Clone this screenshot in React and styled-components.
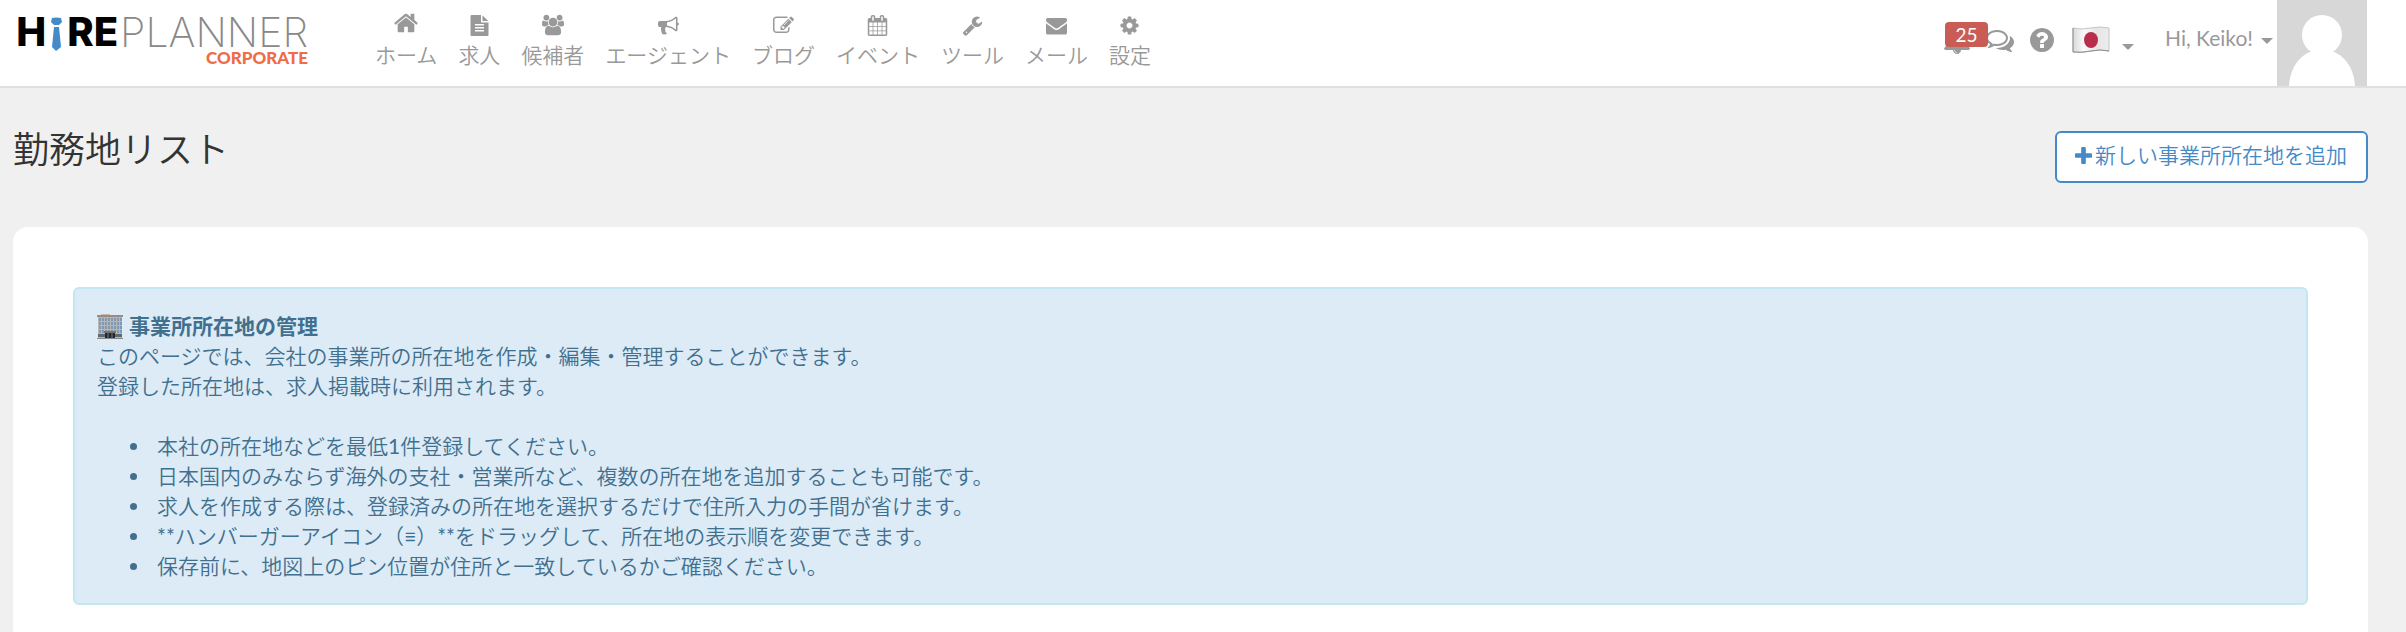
import React from 'react';
import styled, { createGlobalStyle } from 'styled-components';

const GlobalStyle = createGlobalStyle`
  * {
    box-sizing: border-box;
  }

  body {
    margin: 0;
    background: #f0f0f0;
    color: #333;
    font-family: Lato, 'Noto Sans CJK JP', sans-serif;
    font-size: 21px;
    font-weight: 350;
    line-height: 30px;
  }
`;

const icons = {
  home: 'M1472 992v480q0 26-19 45t-45 19h-384v-384h-256v384h-384q-26 0-45-19t-19-45v-480q0-1 .5-3t.5-3l575-474 575 474q1 2 1 6zm223-69l-62 74q-8 9-21 11h-3q-13 0-21-7l-692-577-692 577q-12 8-24 7-13-2-21-11l-62-74q-8-10-7-23.5t11-21.5l719-599q32-26 76-26t76 26l244 204v-195q0-14 9-23t23-9h192q14 0 23 9t9 23v408l219 182q10 8 11 21.5t-7 23.5z',
  file: 'M1596 476q14 14 28 36h-472v-472q22 14 36 28zm-476 164h544v1056q0 40-28 68t-68 28h-1344q-40 0-68-28t-28-68v-1600q0-40 28-68t68-28h800v544q0 40 28 68t68 28zm160 736v-64q0-14-9-23t-23-9h-704q-14 0-23 9t-9 23v64q0 14 9 23t23 9h704q14 0 23-9t9-23zm0-256v-64q0-14-9-23t-23-9h-704q-14 0-23 9t-9 23v64q0 14 9 23t23 9h704q14 0 23-9t9-23zm0-256v-64q0-14-9-23t-23-9h-704q-14 0-23 9t-9 23v64q0 14 9 23t23 9h704q14 0 23-9t9-23z',
  users: 'M593 896q-162 5-265 128h-134q-82 0-138-40.5t-56-118.5q0-353 124-353 6 0 43.5 21t97.5 42.5 119 21.5q67 0 133-23-5 37-5 66 0 139 81 256zm1071 637q0 120-73 189.5t-194 69.5h-874q-121 0-194-69.5t-73-189.5q0-53 3.5-103.5t14-109 26.5-108.5 43-97.5 62-81 85.5-53.5 111.5-20q10 0 43 21.5t73 48 107 48 135 21.5 135-21.5 107-48 73-48 43-21.5q61 0 111.5 20t85.5 53.5 62 81 43 97.5 26.5 108.5 14 109 3.5 103.5zm-1024-1277q0 106-75 181t-181 75-181-75-75-181 75-181 181-75 181 75 75 181zm704 384q0 159-112.5 271.5t-271.5 112.5-271.5-112.5-112.5-271.5 112.5-271.5 271.5-112.5 271.5 112.5 112.5 271.5zm576 225q0 78-56 118.5t-138 40.5h-134q-103-123-265-128 81-117 81-256 0-29-5-66 66 23 133 23 59 0 119-21.5t97.5-42.5 43.5-21q124 0 124 353zm-128-609q0 106-75 181t-181 75-181-75-75-181 75-181 181-75 181 75 75 181z',
  bullhorn: 'M1664 640q53 0 90.5 37.5t37.5 90.5-37.5 90.5-90.5 37.5v384q0 52-38 90t-90 38q-417-347-812-380-58 19-91 66t-31 100.5 40 92.5q-20 33-23 65.5t6 58 33.5 55 48 50 61.5 50.5q-29 58-111.5 83t-168.5 11.5-132-55.5q-7-23-29.5-87.5t-32-94.5-23-89-15-101 3.5-98.5 22-110.5h-122q-66 0-113-47t-47-113v-192q0-66 47-113t113-47h480q435 0 896-384 52 0 90 38t38 90v384zm-128 604v-954q-394 302-768 343v270q377 42 768 341z',
  edit: 'M888 1184l116-116-152-152-116 116v56h96v96h56zm440-720q-16-16-33 1l-350 350q-17 17-1 33t33-1l350-350q17-17 1-33zm80 594v190q0 119-84.5 203.5t-203.5 84.5h-832q-119 0-203.5-84.5t-84.5-203.5v-832q0-119 84.5-203.5t203.5-84.5h832q63 0 117 25 15 7 18 23 3 17-9 29l-49 49q-14 14-32 8-23-6-45-6h-832q-66 0-113 47t-47 113v832q0 66 47 113t113 47h832q66 0 113-47t47-113v-126q0-13 9-22l64-64q15-15 35-7t20 29zm-96-738l288 288-672 672h-288v-288zm444 132l-92 92-288-288 92-92q28-28 68-28t68 28l152 152q28 28 28 68t-28 68z',
  calendar: 'M192 1664h288v-288h-288v288zm352 0h320v-288h-320v288zm-352-352h288v-320h-288v320zm352 0h320v-320h-320v320zm-352-384h288v-288h-288v288zm736 736h320v-288h-320v288zm-384-736h320v-288h-320v288zm768 736h288v-288h-288v288zm-384-352h320v-320h-320v320zm-352-864v-288q0-13-9.5-22.5t-22.5-9.5h-64q-13 0-22.5 9.5t-9.5 22.5v288q0 13 9.5 22.5t22.5 9.5h64q13 0 22.5-9.5t9.5-22.5zm736 864h288v-320h-288v320zm-384-384h320v-288h-320v288zm384 0h288v-288h-288v288zm32-480v-288q0-13-9.5-22.5t-22.5-9.5h-64q-13 0-22.5 9.5t-9.5 22.5v288q0 13 9.5 22.5t22.5 9.5h64q13 0 22.5-9.5t9.5-22.5zm384-64v1280q0 52-38 90t-90 38h-1408q-52 0-90-38t-38-90v-1280q0-52 38-90t90-38h128v-96q0-66 47-113t113-47h64q66 0 113 47t47 113v96h384v-96q0-66 47-113t113-47h64q66 0 113 47t47 113v96h128q52 0 90 38t38 90z',
  wrench: 'M448 1472q0-26-19-45t-45-19-45 19-19 45 19 45 45 19 45-19 19-45zm644-420l-682 682q-37 37-90 37-52 0-91-37l-106-108q-38-36-38-90 0-53 38-91l681-681q39 98 114.5 173.5t173.5 114.5zm634-435q0 39-23 106-47 134-164.5 217.5t-258.5 83.5q-185 0-316.5-131.5t-131.5-316.5 131.5-316.5 316.5-131.5q58 0 121.5 16.5t107.5 46.5q16 11 16 28t-16 28l-293 169v224l193 107q5-3 79-48.5t135.5-81 70.5-35.5q15 0 23.5 10t8.5 25z',
  envelope: 'M1792 710v794q0 66-47 113t-113 47h-1472q-66 0-113-47t-47-113v-794q44 49 101 87 362 246 497 345 57 42 92.5 65.5t94.5 48 110 24.5h2q51 0 110-24.5t94.5-48 92.5-65.5q170-123 498-345 57-39 100-87zm0-294q0 79-49 151t-122 123q-376 261-468 325-10 7-42.5 31t-54 38.5-52 32.5-57.5 27-50 9h-2q-23 0-50-9t-57.5-27-52-32.5-54-38.5-42.5-31q-91-64-262-182.5t-205-142.5q-62-42-117-115.5t-55-136.5q0-78 41.5-130t118.5-52h1472q65 0 112.5 47t47.5 113z',
  cog: 'M1152 896q0-106-75-181t-181-75-181 75-75 181 75 181 181 75 181-75 75-181zm512-109v222q0 12-8 23t-20 13l-185 28q-19 54-39 91 35 50 107 138 10 12 10 25t-9 23q-27 37-99 108t-94 71q-12 0-26-9l-138-108q-44 23-91 38-16 136-29 186-7 28-36 28h-222q-14 0-24.5-8.5t-11.5-21.5l-28-184q-49-16-90-37l-141 107q-10 9-25 9-14 0-25-11-126-114-165-168-7-10-7-23 0-12 8-23 15-21 51-66.5t54-70.5q-27-50-41-99l-183-27q-13-2-21-12.5t-8-23.5v-222q0-12 8-23t19-13l186-28q14-46 39-92-40-57-107-138-10-12-10-24 0-10 9-23 26-36 98.5-107.5t94.5-71.5q13 0 26 10l138 107q44-23 91-38 16-136 29-186 7-28 36-28h222q14 0 24.5 8.5t11.5 21.5l28 184q49 16 90 37l142-107q9-9 24-9 13 0 25 10 129 119 165 170 7 8 7 22 0 12-8 23-15 21-51 66.5t-54 70.5q26 50 41 98l183 28q13 2 21 12.5t8 23.5z',
  bell: 'M912 1696q0-16-16-16-59 0-101.5-42.5t-42.5-101.5q0-16-16-16t-16 16q0 73 51.5 124.5t124.5 51.5q16 0 16-16zm816-288q0 52-38 90t-90 38h-448q0 106-75 181t-181 75-181-75-75-181h-448q-52 0-90-38t-38-90q50-42 91-88t85-119.5 74.5-158.5 50-206 19.5-260q0-152 117-282.5t307-158.5q-8-19-8-39 0-40 28-68t68-28 68 28 28 68q0 20-8 39 190 28 307 158.5t117 282.5q0 139 19.5 260t50 206 74.5 158.5 85 119.5 91 88z',
  comments: 'M704 384q-153 0-286 52t-211.5 141-78.5 191q0 82 53 158t149 132l97 56-35 84q34-20 62-39l44-31 53 10q78 14 153 14 153 0 286-52t211.5-141 78.5-191-78.5-191-211.5-141-286-52zm0-128q191 0 353.5 68.5t256.5 186.5 94 257-94 257-256.5 186.5-353.5 68.5q-86 0-176-16-124 88-278 128-36 9-86 16h-3q-11 0-20.5-8t-11.5-21q-1-3-1-6.5t.5-6.5 2-6l2.5-5 3.5-5.5 4-5 4.5-5 4-4.5q5-6 23-25t26-29.5 22.5-29 25-38.5 20.5-44q-124-72-195-177t-71-224q0-139 94-257t256.5-186.5 353.5-68.5zm822 1169q10 24 20.5 44t25 38.5 22.5 29 26 29.5 23 25q1 1 4 4.5t4.5 5 4 5 3.5 5.5l2.5 5 2 6 .5 6.5-1 6.5q-3 14-13 22t-22 7q-50-7-86-16-154-40-278-128-90 16-176 16-271 0-472-132 58 4 88 4 161 0 309-45t264-129q125-92 192-212t67-254q0-77-23-152 129 71 204 178t75 230q0 120-71 224.5t-195 176.5z',
  question: 'M1024 1376v-192q0-14-9-23t-23-9h-192q-14 0-23 9t-9 23v192q0 14 9 23t23 9h192q14 0 23-9t9-23zm256-672q0-88-55.5-163t-138.5-116-170-41q-243 0-371 213-15 24 8 42l132 100q7 6 19 6 16 0 25-12 53-68 86-92 34-24 86-24 48 0 85.5 26t37.5 59q0 38-20 61t-68 45q-63 28-115.5 86.5t-52.5 125.5v36q0 14 9 23t23 9h192q14 0 23-9t9-23q0-19 21.5-49.5t54.5-49.5q32-18 49-28.5t46-35 44.5-48 28-60.5 12.5-81zm384 192q0 209-103 385.5t-279.5 279.5-385.5 103-385.5-103-279.5-279.5-103-385.5 103-385.5 279.5-279.5 385.5-103 385.5 103 279.5 279.5 103 385.5z',
  plus: 'M1600 736v192q0 40-28 68t-68 28h-416v416q0 40-28 68t-68 28h-192q-40 0-68-28t-28-68v-416h-416q-40 0-68-28t-28-68v-192q0-40 28-68t68-28h416v-416q0-40 28-68t68-28h192q40 0 68 28t28 68v416h416q40 0 68 28t28 68z',
};

const Icon = ({ name, size = 21, box = '0 0 1792 1792' }) => (
  <svg width={size} height={size} viewBox={box} fill="currentColor" aria-hidden="true">
    <path d={icons[name]} />
  </svg>
);

const Header = styled.header`
  display: flex;
  align-items: flex-start;
  border-bottom: 2px solid #e0e0e0;
  background: #fff;
  color: #999;
`;

const Logo = styled.a`
  display: flex;
  flex-direction: column;
  align-items: flex-end;
  min-width: 310px;
  margin: 12px 55px 0 0;
  padding-right: 2px;
  text-decoration: none;
`;

const LogoName = styled.span`
  display: flex;
  align-items: center;
  height: 40px;
  font-family: Inter, sans-serif;
  font-size: 40px;
  line-height: 40px;
`;

const LogoBold = styled.span`
  color: #000;
  font-weight: 800;
`;

const LogoThin = styled.span`
  margin-left: 2px;
  color: #888;
  font-size: 41px;
  font-weight: 200;
`;

const LogoTag = styled.span`
  color: #ee6c48;
  font-size: 17px;
  font-weight: 900;
  line-height: 12px;
`;

const Tie = styled.svg`
  margin: 3px 5px 0;
`;

const Nav = styled.nav`
  display: flex;
  gap: 21px;
  padding: 10px 0 0 10px;
`;

const NavLink = styled.a`
  display: flex;
  flex-direction: column;
  align-items: center;
  color: inherit;
  text-decoration: none;
`;

const NavIcon = styled.span`
  display: flex;
  align-items: flex-end;
  height: 26px;
  margin-bottom: 4px;
`;

const Tools = styled.div`
  display: flex;
  align-items: center;
  height: 86px;
  margin-left: auto;
  padding-right: 39px;
`;

const ToolButton = styled.button`
  display: flex;
  align-items: center;
  position: relative;
  gap: ${(props) => props.$gap || 0}px;
  margin: 0 ${(props) => props.$space || 0}px 0 0;
  padding: 0 0 ${(props) => props.$text ? '10px' : '6px'};
  border: 0;
  background: none;
  color: inherit;
  font: inherit;
  font-weight: 400;
  cursor: pointer;
`;

const Badge = styled.span`
  position: absolute;
  top: -4px;
  left: 2px;
  z-index: 1;
  width: 43px;
  height: 25px;
  border-radius: 4px;
  background: #c95d55;
  color: #fff;
  font-size: 19px;
  line-height: 25px;
  text-align: center;
`;

const Caret = styled.span`
  margin-top: ${(props) => props.$low ? '14px' : '6px'};
  border-top: 6px solid;
  border-right: 6px solid transparent;
  border-left: 6px solid transparent;
`;

const Avatar = styled.svg`
  display: block;
  width: 90px;
  height: 86px;
`;

const Main = styled.main`
  padding: 43px 38px 0 13px;
`;

const TitleRow = styled.div`
  display: flex;
  align-items: flex-start;
  justify-content: space-between;
  margin-bottom: 44px;
`;

const Title = styled.h1`
  margin: 0;
  font-size: 36px;
  font-weight: 350;
  line-height: 36px;
`;

const AddButton = styled.button`
  display: flex;
  align-items: center;
  gap: 3px;
  padding: 7px 19px 11px 18px;
  border: 2px solid #4489c8;
  border-radius: 6px;
  background: #fff;
  color: #4489c8;
  font: inherit;
  cursor: pointer;
`;

const Panel = styled.section`
  padding: 60px;
  border-radius: 15px;
  background: #fff;
`;

const Alert = styled.div`
  padding: 22px;
  border: 2px solid #c2e7f0;
  border-radius: 6px;
  background: #ddebf6;
  color: #41708f;
`;

const AlertTitle = styled.strong`
  display: flex;
  align-items: center;
  gap: 6px;
  font-weight: 700;
`;

const Text = styled.p`
  margin: 0;
`;

const List = styled.ul`
  margin: 30px 0 0;
  padding-left: 54px;
`;

const Item = styled.li`
  padding-left: 6px;
`;

// Lato has no 350 weight and would fall back to its light cut
const Latin = styled.span`
  font-weight: 400;
`;

const Building = () => (
  <svg width="26" height="26" viewBox="0 0 26 26" aria-hidden="true">
    <path d="M4 1h9v2H4z" fill="#c4b8ae" />
    <path d="M1 3h24v22H1z" fill="#b9b6b0" />
    <path d="M0 2h26v2H0z" fill="#9c8b7e" />
    {[5, 9, 13, 17].map((y) => [2, 5, 8, 11, 14, 17, 20, 23].map((x) => (
      <path key={`${x}-${y}`} d={`M${x} ${y}h2v3h-2z`} fill="#7f9ab2" />
    )))}
    <path d="M1 21h7v3H1zM18 21h7v3h-7z" fill="#5c6a76" />
    <path d="M7 18h12v2H7z" fill="#8a6f60" />
    <path d="M8 20h10v5H8z" fill="#1c2b38" />
    <path d="M11 20v5M15 20v5" stroke="#6d7f8c" />
    <path d="M0 25h26v1H0z" fill="#8d8580" />
  </svg>
);

const Flag = () => (
  <svg width="38" height="28" viewBox="0 0 38 28" aria-hidden="true">
    <defs>
      <linearGradient id="cloth">
        <stop offset="0" stopColor="#d9d9d9" />
        <stop offset=".3" stopColor="#fafafa" />
        <stop offset=".65" stopColor="#e6e6e6" />
        <stop offset="1" stopColor="#ececec" />
      </linearGradient>
    </defs>
    <path d="M1 2Q10 4 19 2T37 2V25Q28 23 19 25T1 26z" fill="url(#cloth)" stroke="#c4c4c4" />
    <path d="M1 26Q10 27 19 25T37 25M1 2v24" fill="none" stroke="#8f8f8f" />
    <ellipse cx="19" cy="14" rx="7" ry="8" fill="#b92f4b" />
  </svg>
);

const links = [
  { icon: 'home', label: 'ホーム', size: 26 },
  { icon: 'file', label: '求人' },
  { icon: 'users', label: '候補者', size: 22, box: '0 0 1920 1792' },
  { icon: 'bullhorn', label: 'エージェント' },
  { icon: 'edit', label: 'ブログ' },
  { icon: 'calendar', label: 'イベント' },
  { icon: 'wrench', label: 'ツール' },
  { icon: 'envelope', label: 'メール' },
  { icon: 'cog', label: '設定' },
];

const App = () => {
  return (
    <>
      <GlobalStyle />
      <Header>
        <Logo href="#">
          <LogoName>
            <LogoBold>H</LogoBold>
            <Tie width="11" height="34" viewBox="0 0 11 34" fill="#4489c8" aria-hidden="true">
              <path d="M1 1Q5 0 10 1L11 5 8 8H3L0 5z" />
              <path d="M3 10H8L10 30 5 34 1 30z" />
            </Tie>
            <LogoBold>RE</LogoBold>
            <LogoThin>PLANNER</LogoThin>
          </LogoName>
          <LogoTag>CORPORATE</LogoTag>
        </Logo>
        <Nav>
          {links.map((link) => (
            <NavLink key={link.icon} href="#">
              <NavIcon><Icon name={link.icon} size={link.size} box={link.box} /></NavIcon>
              {link.label}
            </NavLink>
          ))}
        </Nav>
        <Tools>
          <ToolButton $space={15} aria-label="通知">
            <Icon name="bell" size={28} />
            <Badge>25</Badge>
          </ToolButton>
          <ToolButton $space={14} aria-label="メッセージ"><Icon name="comments" size={28} /></ToolButton>
          <ToolButton $space={16} aria-label="ヘルプ"><Icon name="question" size={28} /></ToolButton>
          <ToolButton $space={31} $gap={12} aria-label="言語">
            <Flag />
            <Caret $low />
          </ToolButton>
          <ToolButton $space={4} $gap={8} $text>
            Hi, Keiko!
            <Caret />
          </ToolButton>
          <Avatar viewBox="0 0 90 86" aria-hidden="true">
            <path d="M0 0h90v86H0z" fill="#d7d7d7" />
            <circle cx="45" cy="35" r="20" fill="#fff" />
            <path d="M12 86C13 67 24 54 36 51H54C66 54 77 67 78 86z" fill="#fff" />
          </Avatar>
        </Tools>
      </Header>
      <Main>
        <TitleRow>
          <Title>勤務地リスト</Title>
          <AddButton>
            <Icon name="plus" size={17} box="192 128 1408 1408" />
            新しい事業所所在地を追加
          </AddButton>
        </TitleRow>
        <Panel>
          <Alert>
            <AlertTitle><Building />事業所所在地の管理</AlertTitle>
            <Text>このページでは、会社の事業所の所在地を作成・編集・管理することができます。</Text>
            <Text>登録した所在地は、求人掲載時に利用されます。</Text>
            <List>
              <Item>本社の所在地などを最低<Latin>1</Latin>件登録してください。</Item>
              <Item>日本国内のみならず海外の支社・営業所など、複数の所在地を追加することも可能です。</Item>
              <Item>求人を作成する際は、登録済みの所在地を選択するだけで住所入力の手間が省けます。</Item>
              <Item>
                <Latin>**</Latin>ハンバーガーアイコン（<Latin>≡</Latin>）<Latin>**</Latin>をドラッグして、所在地の表示順を変更できます。
              </Item>
              <Item>保存前に、地図上のピン位置が住所と一致しているかご確認ください。</Item>
            </List>
          </Alert>
        </Panel>
      </Main>
    </>
  );
}

export default App;
